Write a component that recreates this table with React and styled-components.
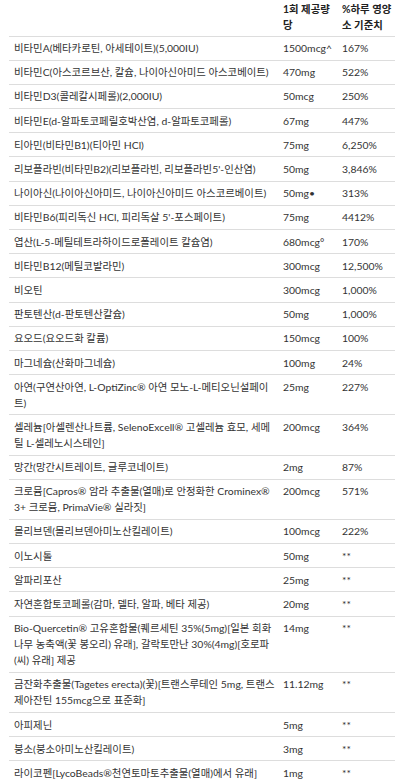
import React from 'react';
import styled, { createGlobalStyle } from 'styled-components';

const GlobalStyle = createGlobalStyle`
  html, body {
    margin: 0;
    padding: 0;
    background: #ffffff;
  }
  body {
    font-family: 'Lato', 'Noto Sans CJK KR', sans-serif;
  }
`;

const rows = [
  ['비타민A(베타카로틴, 아세테이트)(5,000IU)', '1500mcg^', '167%'],
  ['비타민C(아스코르브산, 칼슘, 나이아신아미드 아스코베이트)', '470mg', '522%'],
  ['비타민D3(콜레칼시페롤)(2,000IU)', '50mcg', '250%'],
  ['비타민E(d-알파토코페릴호박산염, d-알파토코페롤)', '67mg', '447%'],
  ['티아민(비타민B1)(티아민 HCl)', '75mg', '6,250%'],
  ['리보플라빈(비타민B2)(리보플라빈, 리보플라빈5\'-인산염)', '50mg', '3,846%'],
  ['나이아신(나이아신아미드, 나이아신아미드 아스코르베이트)', '50mg•', '313%'],
  ['비타민B6(피리독신 HCl, 피리독살 5\'-포스페이트)', '75mg', '4412%'],
  ['엽산(L-5-메틸테트라하이드로폴레이트 칼슘염)', '680mcg°', '170%'],
  ['비타민B12(메틸코발라민)', '300mcg', '12,500%'],
  ['비오틴', '300mcg', '1,000%'],
  ['판토텐산(d-판토텐산칼슘)', '50mg', '1,000%'],
  ['요오드(요오드화 칼륨)', '150mcg', '100%'],
  ['마그네슘(산화마그네슘)', '100mg', '24%'],
  ['아연(구연산아연, L-OptiZinc® 아연 모노-L-메티오닌설페이트)', '25mg', '227%'],
  ['셀레늄[아셀렌산나트륨, SelenoExcell® 고셀레늄 효모, 세메틸 L-셀레노시스테인]', '200mcg', '364%'],
  ['망간(망간시트레이트, 글루코네이트)', '2mg', '87%'],
  ['크로뮴[Capros® 암라 추출물(열매)로 안정화한 Crominex® 3+ 크로뮴, PrimaVie® 실라짓]', '200mcg', '571%'],
  ['몰리브덴(몰리브덴아미노산킬레이트)', '100mcg', '222%'],
  ['이노시톨', '50mg', '**'],
  ['알파리포산', '25mg', '**'],
  ['자연혼합토코페롤(감마, 델타, 알파, 베타 제공)', '20mg', '**'],
  ['Bio-Quercetin® 고유혼합물(퀘르세틴 35%(5mg)[일본 회화나무 농축액(꽃 봉오리) 유래], 갈락토만난 30%(4mg)[호로파(씨) 유래] 제공', '14mg', '**'],
  ['금잔화추출물(Tagetes erecta)(꽃)[트랜스루테인 5mg, 트랜스제아잔틴 155mcg으로 표준화]', '11.12mg', '**'],
  ['아피제닌', '5mg', '**'],
  ['붕소(붕소아미노산킬레이트)', '3mg', '**'],
  ['라이코펜[LycoBeads®천연토마토추출물(열매)에서 유래]', '1mg', '**'],
];

const App = () => (
  <>
    <GlobalStyle />
    <Page>
      <Table>
        <colgroup>
          <col style={{ width: 269 }} />
          <col style={{ width: 59 }} />
          <col style={{ width: 58 }} />
        </colgroup>
        <thead>
          <tr>
            <HeadCell />
            <HeadCell>1회 제공량 당</HeadCell>
            <HeadCell>%하루 영양소 기준치</HeadCell>
          </tr>
        </thead>
        <tbody>
          {rows.map(([name, amount, dv]) => (
            <Row key={name}>
              <Cell>{name}</Cell>
              <Cell $nowrap>{amount}</Cell>
              <Cell $nowrap>{dv}</Cell>
            </Row>
          ))}
        </tbody>
      </Table>
    </Page>
  </>
);

const Page = styled.div`
  padding: 0 12px 0 9px;
  background: #ffffff;
`;

const Table = styled.table`
  width: 386px;
  table-layout: fixed;
  border-collapse: collapse;
  font-size: 10.4px;
  color: #333333;
`;

const HeadCell = styled.th`
  text-align: left;
  vertical-align: top;
  font-weight: 700;
  color: #222222;
  line-height: 16px;
  padding: 0.5px 0 3px 5px;
  border-bottom: 1px solid #dddddd;
`;

const Row = styled.tr`
  border-bottom: 1px solid #dddddd;
`;

const Cell = styled.td`
  vertical-align: top;
  line-height: 16px;
  padding: 3.6px 3px 3.6px 5px;
  white-space: ${p => (p.$nowrap ? 'nowrap' : 'normal')};
`;

export default App;
